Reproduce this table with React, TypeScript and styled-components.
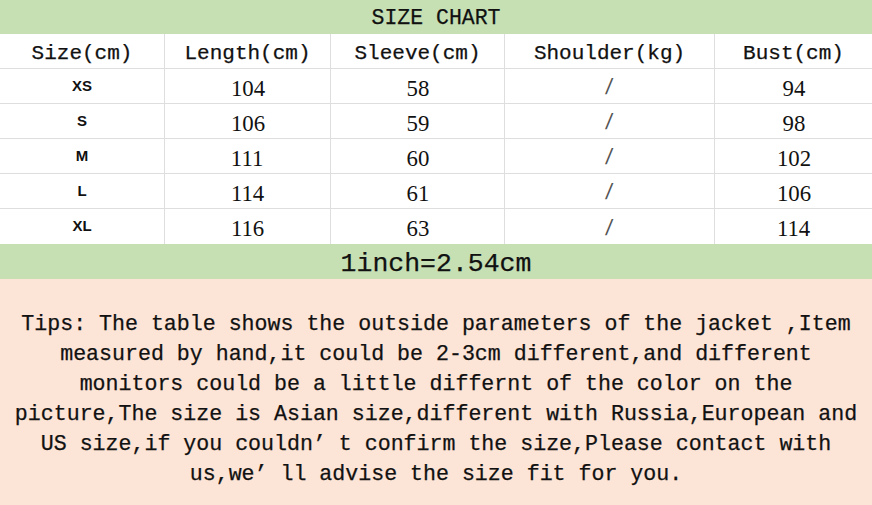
import styled, { createGlobalStyle } from 'styled-components'

const GlobalStyle = createGlobalStyle`
  html, body {
    margin: 0;
    padding: 0;
    background: #ffffff;
  }
  body {
    width: 872px;
    height: 505px;
    overflow: hidden;
  }
`

const mono = `"Liberation Mono", "DejaVu Sans Mono", monospace`

const Page = styled.div`
  width: 872px;
  height: 505px;
  display: flex;
  flex-direction: column;
  color: #111;
`

const Band = styled.div<{ $h: number; $size: number; $shift: number }>`
  height: ${(p) => p.$h}px;
  box-sizing: border-box;
  padding-top: ${(p) => p.$shift}px;
  background: #c6e0b4;
  display: flex;
  align-items: center;
  justify-content: center;
  font-family: ${mono};
  font-size: ${(p) => p.$size}px;
  line-height: 1;
  -webkit-text-stroke: 0.25px #111;
`

const Table = styled.div`
  display: grid;
  grid-template-columns: 165px 166px 174px 210px 1fr;
  grid-auto-rows: 35px;
  background: #ffffff;
`

const Cell = styled.div<{ $last?: boolean; $bottom?: boolean }>`
  box-sizing: border-box;
  display: flex;
  align-items: center;
  justify-content: center;
  border-right: ${(p) => (p.$last ? 'none' : '1px solid #dedede')};
  border-bottom: ${(p) => (p.$bottom ? 'none' : '1px solid #dedede')};
  line-height: 1;
`

const HeadText = styled.span`
  font-family: ${mono};
  font-size: 21px;
  padding-top: 4px;
  -webkit-text-stroke: 0.25px #111;
`

const SizeLabel = styled.span`
  font-family: "Liberation Sans", Arial, sans-serif;
  font-weight: 700;
  font-size: 15px;
  margin-top: -2px;
`

const Num = styled.span`
  font-family: "Liberation Serif", "Times New Roman", serif;
  font-size: 24px;
  padding-top: 3px;
  transform: scaleX(0.95);
`

const Slash = styled.span`
  font-family: "Liberation Sans", Arial, sans-serif;
  font-weight: 300;
  font-size: 22px;
  color: #555;
  padding-top: 2px;
  transform: skewX(-8deg);
`

const Tips = styled.div`
  flex: 1;
  background: #fce4d6;
  padding-top: 30px;
  font-family: ${mono};
  font-size: 21.6px;
  color: #111;
  -webkit-text-stroke: 0.25px #111;
`

const TipLine = styled.div`
  height: 30px;
  line-height: 30px;
  text-align: center;
  white-space: pre;
`

const headers = ['Size(cm)', 'Length(cm)', 'Sleeve(cm)', 'Shoulder(kg)', 'Bust(cm)']

const rows = [
  { size: 'XS', length: 104, sleeve: 58, bust: 94 },
  { size: 'S', length: 106, sleeve: 59, bust: 98 },
  { size: 'M', length: 111, sleeve: 60, bust: 102 },
  { size: 'L', length: 114, sleeve: 61, bust: 106 },
  { size: 'XL', length: 116, sleeve: 63, bust: 114 },
]

const tips = [
  'Tips: The table shows the outside parameters of the jacket ,Item',
  'measured by hand,it could be 2-3cm different,and different',
  'monitors could be a little differnt of the color on the',
  'picture,The size is Asian size,different with Russia,European and',
  'US size,if you couldn’ t confirm the size,Please contact with',
  'us,we’ ll advise the size fit for you.',
]

const App = () => {
  return (
    <>
      <GlobalStyle />
      <Page>
        <Band $h={34} $size={21.5} $shift={4}>SIZE CHART</Band>
        <Table>
          {headers.map((h, i) => (
            <Cell key={h} $last={i === headers.length - 1}>
              <HeadText>{h}</HeadText>
            </Cell>
          ))}
          {rows.map((r, i) => {
            const bottom = i === rows.length - 1
            return [
              <Cell key={r.size + 'a'} $bottom={bottom}>
                <SizeLabel>{r.size}</SizeLabel>
              </Cell>,
              <Cell key={r.size + 'b'} $bottom={bottom}>
                <Num>{r.length}</Num>
              </Cell>,
              <Cell key={r.size + 'c'} $bottom={bottom}>
                <Num>{r.sleeve}</Num>
              </Cell>,
              <Cell key={r.size + 'd'} $bottom={bottom}>
                <Slash>/</Slash>
              </Cell>,
              <Cell key={r.size + 'e'} $bottom={bottom} $last>
                <Num>{r.bust}</Num>
              </Cell>,
            ]
          })}
        </Table>
        <Band $h={35} $size={26.5} $shift={6}>1inch=2.54cm</Band>
        <Tips>
          {tips.map((t) => (
            <TipLine key={t}>{t}</TipLine>
          ))}
        </Tips>
      </Page>
    </>
  )
}

export default App
